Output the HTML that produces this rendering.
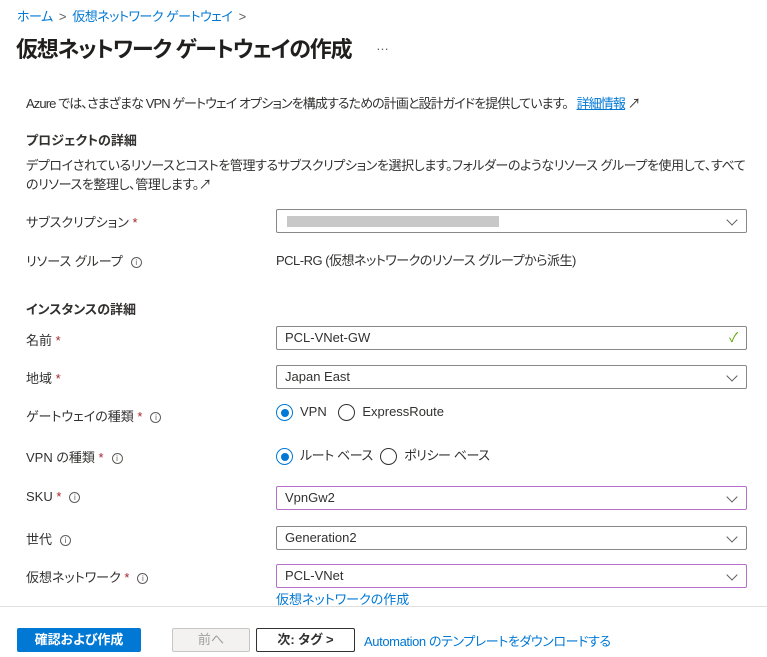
<!DOCTYPE html>
<html><head><meta charset="utf-8"><style>
*{margin:0;padding:0;box-sizing:border-box}
body{width:767px;height:657px;background:#fff;font-family:"Liberation Sans","Noto Sans CJK JP",sans-serif;font-size:13px;font-feature-settings:"palt";color:#323130;position:relative;overflow:hidden}
.a{position:absolute;white-space:nowrap}
.lnk{color:#0078d4}
.req{color:#a4262c}
.info{display:inline-block;width:11px;height:11px;border:1px solid #605e5c;border-radius:50%;font-size:8px;line-height:9px;text-align:center;color:#605e5c;margin-left:8px;vertical-align:middle;letter-spacing:0}
.box{position:absolute;left:276px;width:471px;height:24px;border:1px solid #8a8886;border-radius:2px;padding-left:8px;line-height:22px}
.box.p{border-color:#b56fc8}
.chev{position:absolute;right:10px;top:6px;width:8px;height:8px;border-right:1.3px solid #605e5c;border-bottom:1.3px solid #605e5c;transform:rotate(45deg)}
.rad{display:inline-block;width:17px;height:17px;border:1px solid #323130;border-radius:50%;vertical-align:middle;position:relative;margin-right:7px}
.rad.on{border-color:#0078d4}
.rad.on:after{content:"";position:absolute;left:3.5px;top:3.5px;width:8px;height:8px;border-radius:50%;background:#0078d4}
.b{font-weight:bold}
</style></head><body>
<div class="a lnk" style="left:17px;top:6px;letter-spacing:-0.5px">ホーム <span style="color:#605e5c">&nbsp;&gt;&nbsp;</span> 仮想ネットワーク ゲートウェイ <span style="color:#605e5c">&nbsp;&gt;</span></div>
<div class="a" style="left:16px;top:32px;font-size:22px;font-weight:600;color:#201f1e;letter-spacing:-1.2px">仮想ネットワーク ゲートウェイの作成</div>
<div class="a" style="left:376px;top:38px;color:#605e5c">…</div>
<div class="a" style="left:26px;top:93px;letter-spacing:-0.9px">Azure では、さまざまな VPN ゲートウェイ オプションを構成するための計画と設計ガイドを提供しています。 <span class="lnk" style="text-decoration:underline;margin-left:6px">詳細情報</span> ↗</div>
<div class="a b" style="left:26px;top:130px">プロジェクトの詳細</div>
<div class="a" style="left:26px;top:156px;width:722px;white-space:normal;line-height:19px;letter-spacing:-0.4px">デプロイされているリソースとコストを管理するサブスクリプションを選択します。フォルダーのようなリソース グループを使用して、すべてのリソースを整理し、管理します。↗</div>
<div class="a" style="left:26px;top:212px">サブスクリプション <span class="req">*</span></div>
<div class="box" style="top:209px"><div style="position:absolute;left:10px;top:6px;width:212px;height:11px;background:#c8c8c8"></div><div class="chev"></div></div>
<div class="a" style="left:26px;top:251px">リソース グループ<span class="info">i</span></div>
<div class="a" style="left:276px;top:250px;letter-spacing:-0.5px">PCL-RG (仮想ネットワークのリソース グループから派生)</div>
<div class="a b" style="left:26px;top:299px">インスタンスの詳細</div>
<div class="a" style="left:26px;top:330px">名前 <span class="req">*</span></div>
<div class="box" style="top:326px">PCL-VNet-GW<span style="position:absolute;right:8px;color:#57a300">✓</span></div>
<div class="a" style="left:26px;top:368px">地域 <span class="req">*</span></div>
<div class="box" style="top:365px">Japan East<div class="chev"></div></div>
<div class="a" style="left:26px;top:406px">ゲートウェイの種類 <span class="req">*</span><span class="info">i</span></div>
<div class="a" style="left:276px;top:404px"><span class="rad on"></span>VPN <span class="rad" style="margin-left:8px"></span>ExpressRoute</div>
<div class="a" style="left:26px;top:447px">VPN の種類 <span class="req">*</span><span class="info">i</span></div>
<div class="a" style="left:276px;top:445px;letter-spacing:-0.4px"><span class="rad on"></span>ルート ベース <span class="rad" style="margin-left:4px"></span>ポリシー ベース</div>
<div class="a" style="left:26px;top:489px">SKU <span class="req">*</span><span class="info">i</span></div>
<div class="box p" style="top:486px">VpnGw2<div class="chev"></div></div>
<div class="a" style="left:26px;top:529px">世代<span class="info">i</span></div>
<div class="box" style="top:526px">Generation2<div class="chev"></div></div>
<div class="a" style="left:26px;top:567px">仮想ネットワーク <span class="req">*</span><span class="info">i</span></div>
<div class="box p" style="top:564px">PCL-VNet<div class="chev"></div></div>
<div class="a lnk" style="left:276px;top:589px">仮想ネットワークの作成</div>
<div class="a" style="left:0;top:606px;width:767px;height:1px;background:#e1dfdd"></div>
<div class="a b" style="left:17px;top:628px;width:124px;height:24px;background:#0078d4;color:#fff;border-radius:2px;text-align:center;line-height:24px">確認および作成</div>
<div class="a" style="left:172px;top:628px;width:78px;height:24px;background:#f3f2f1;border:1px solid #c8c6c4;color:#a19f9d;border-radius:2px;text-align:center;line-height:22px">前へ</div>
<div class="a b" style="left:256px;top:628px;width:99px;height:24px;border:1px solid #323130;border-radius:2px;text-align:center;line-height:22px">次: タグ &gt;</div>
<div class="a lnk" style="left:364px;top:631px;letter-spacing:-0.4px">Automation のテンプレートをダウンロードする</div>
</body></html>
